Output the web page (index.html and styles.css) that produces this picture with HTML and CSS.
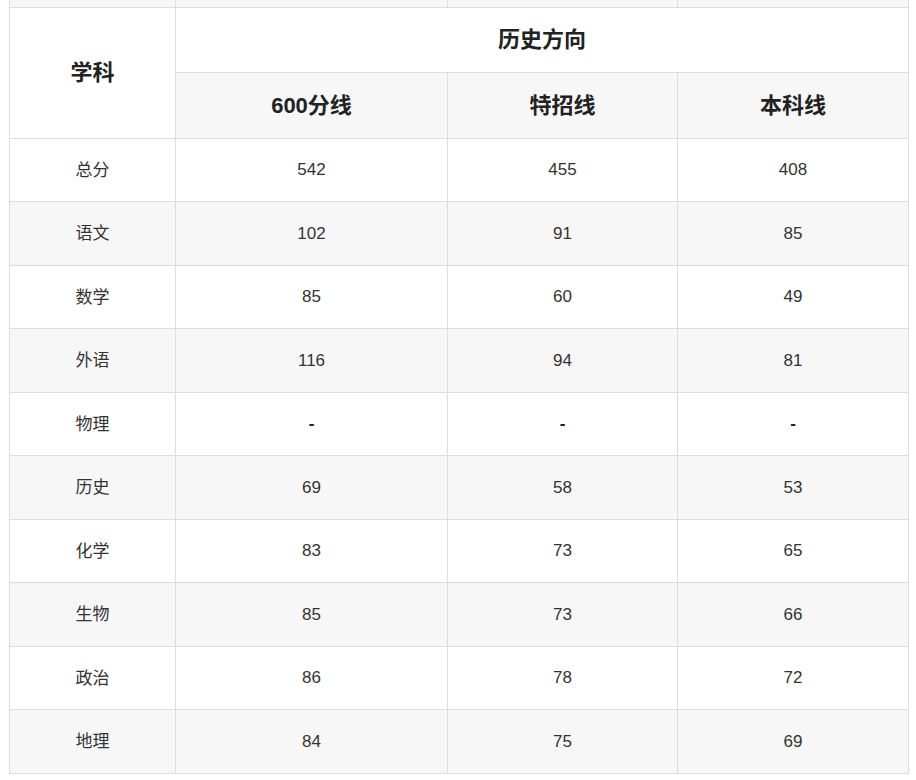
FILE: index.html
```html
<!DOCTYPE html>
<html lang="zh-CN">
<head>
<meta charset="utf-8">
<title>历史方向</title>
<link rel="stylesheet" href="styles.css">
</head>
<body>
<table class="score-table">
  <colgroup>
    <col class="c1"><col class="c2"><col class="c3"><col class="c4">
  </colgroup>
  <tbody>
    <tr class="prev"><td></td><td></td><td></td><td></td></tr>
    <tr class="head1">
      <th rowspan="2" class="subj-head">学科</th>
      <th colspan="3">历史方向</th>
    </tr>
    <tr class="head2 alt">
      <th>600分线</th><th>特招线</th><th>本科线</th>
    </tr>
    <tr><td class="subj">总分</td><td>542</td><td>455</td><td>408</td></tr>
    <tr class="alt"><td class="subj">语文</td><td>102</td><td>91</td><td>85</td></tr>
    <tr><td class="subj">数学</td><td>85</td><td>60</td><td>49</td></tr>
    <tr class="alt"><td class="subj">外语</td><td>116</td><td>94</td><td>81</td></tr>
    <tr><td class="subj">物理</td><td class="dash">-</td><td class="dash">-</td><td class="dash">-</td></tr>
    <tr class="alt"><td class="subj">历史</td><td>69</td><td>58</td><td>53</td></tr>
    <tr><td class="subj">化学</td><td>83</td><td>73</td><td>65</td></tr>
    <tr class="alt"><td class="subj">生物</td><td>85</td><td>73</td><td>66</td></tr>
    <tr><td class="subj">政治</td><td>86</td><td>78</td><td>72</td></tr>
    <tr class="alt"><td class="subj">地理</td><td>84</td><td>75</td><td>69</td></tr>
  </tbody>
</table>
</body>
</html>
```
FILE: styles.css
```css
html, body {
  margin: 0;
  padding: 0;
  background: #ffffff;
}
body {
  padding-left: 9px;
  font-family: "Liberation Sans", Arial, "Noto Sans CJK SC", sans-serif;
  color: #333333;
}
.score-table {
  border-collapse: collapse;
  width: 900px;
  table-layout: fixed;
}
.c1 { width: 166px; }
.c2 { width: 272px; }
.c3 { width: 230px; }
.c4 { width: 231px; }
.score-table td,
.score-table th {
  border: 1px solid #dddddd;
  text-align: center;
  vertical-align: middle;
  padding: 0;
}
.score-table td {
  font-size: 17px;
  height: 62px;
}
.score-table .alt td {
  height: 63px;
}
.score-table td.subj {
  padding-bottom: 4px;
  height: 58px;
}
.score-table .alt td.subj {
  height: 59px;
}
.score-table td.dash {
  font-weight: bold;
  color: #222222;
}
.score-table th {
  font-size: 22px;
  font-weight: bold;
  color: #222222;
  padding-bottom: 6px;
}
.score-table .prev td {
  height: 7px;
  border-top: none;
  background: #f7f7f7;
}
.head1 th {
  height: 58px;
}
.head2 th {
  height: 59px;
}
.alt td, .alt th {
  background: #f7f7f7;
}
.subj-head {
  background: #ffffff;
}
```
